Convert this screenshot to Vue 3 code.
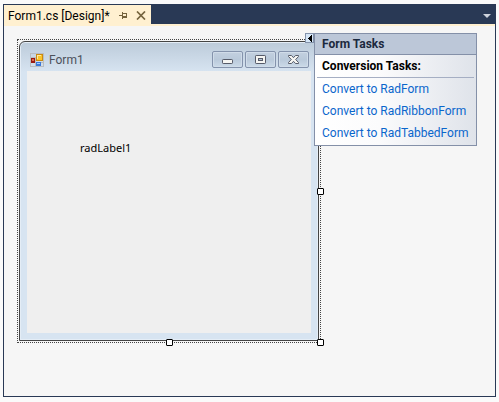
<script setup>
import { ref } from 'vue'

const tasks = ['Convert to RadForm', 'Convert to RadRibbonForm', 'Convert to RadTabbedForm']
const tasksOpen = ref(true)
</script>

<template>
  <div class="page">
    <main class="editor">
      <header class="tabs">
        <div class="tab">
          <span class="tab-name">Form1.cs [Design]*</span>
          <button class="tab-btn" type="button" aria-label="Pin tab">
            <svg width="9" height="9" viewBox="0 0 9 9" shape-rendering="crispEdges">
              <path d="M0 4h3v1H0zM3 1h1v7H3zM4 2h4v1H4zM7 2h1v5H7zM4 5h4v2H4z" fill="#75633d" />
            </svg>
          </button>
          <button class="tab-btn" type="button" aria-label="Close tab">
            <svg width="10" height="9" viewBox="0 0 10 9">
              <path d="M1 .5 9 8.500M9 .5 1 8.500" stroke="#75633d" stroke-width="1.700" />
            </svg>
          </button>
        </div>
        <button class="tab-list" type="button" aria-label="Open documents">
          <svg width="8" height="4" viewBox="0 0 8 4"><path d="M0 0h8L4 4z" fill="#ced4dd" /></svg>
        </button>
      </header>

      <section class="canvas">
        <div class="selection">
          <div class="form">
            <div class="titlebar">
              <svg class="form-icon" width="14" height="14" viewBox="0 0 14 14" shape-rendering="crispEdges">
                <path d="M.5.500h13v13H.5zM.5 4.500h5M5.500 4v9M.5 9.500h13M10.500 9v4" fill="none" stroke="#b9bdc0" />
                <rect x="6" y="1" width="7" height="7" fill="#c98a12" />
                <rect x="7" y="2" width="5" height="5" fill="#fbc52c" />
                <path d="M7 2h4v1H8v3H7z" fill="#ffeb9c" />
                <rect x="1" y="5" width="4" height="5" fill="#9c1a10" />
                <rect x="2" y="6" width="2" height="2" fill="#dc6a50" />
                <rect x="6" y="9" width="5" height="4" fill="#3b78d8" />
                <rect x="7" y="10" width="3" height="1" fill="#a2cbff" />
              </svg>
              <span class="form-title">Form1</span>
              <div class="window-buttons">
                <button type="button" aria-label="Minimize">
                  <svg width="13" height="11" viewBox="0 0 13 11">
                    <rect x="1.500" y="5.500" width="10" height="4" rx=".7" fill="#f5f5f2" stroke="#565b69" />
                  </svg>
                </button>
                <button type="button" aria-label="Maximize">
                  <svg width="13" height="11" viewBox="0 0 13 11">
                    <rect x="1.500" y="1.500" width="10" height="8" rx=".7" fill="#f5f5f2" stroke="#565b69" />
                    <rect x="4.500" y="4.500" width="4" height="2" fill="#b4c3d4" stroke="#565b69" />
                  </svg>
                </button>
                <button type="button" aria-label="Close">
                  <svg width="13" height="11" viewBox="0 0 13 11">
                    <path d="M1.500 1.500h3l2 2.200 2-2.200h3v1L8.700 5.500l2.800 3v1h-3l-2-2.200-2 2.200h-3v-1l2.800-3-2.800-3z" fill="#f5f5f2" stroke="#565b69" />
                  </svg>
                </button>
              </div>
            </div>
            <div class="form-body">
              <span class="rad-label">radLabel1</span>
            </div>
          </div>

          <i class="handle handle-right"></i>
          <i class="handle handle-bottom"></i>
          <i class="handle handle-corner"></i>

          <button class="smart-tag" type="button" aria-label="Form Tasks" @click="tasksOpen = !tasksOpen">
            <svg width="4" height="7" viewBox="0 0 4 7" shape-rendering="crispEdges">
              <path d="M3 0h1v7H3zM2 1h1v5H2zM1 2h1v3H1zM0 3h1v1H0z" fill="#000" />
            </svg>
          </button>
          <aside v-if="tasksOpen" class="tasks">
            <h2>Form Tasks</h2>
            <div class="tasks-body">
              <h3>Conversion Tasks:</h3>
              <ul>
                <li v-for="task in tasks" :key="task"><a href="#">{{ task }}</a></li>
              </ul>
            </div>
          </aside>
        </div>
      </section>
    </main>
  </div>
</template>

<style>
body {
  margin: 0;
  background: #fafafa;
}
</style>

<style scoped>
.page {
  box-sizing: border-box;
  display: flex;
  min-height: 100vh;
  padding: 4px 3px 5px;
  font: 12px/16px Roboto, "Open Sans", sans-serif;
  color: #000;
}
button {
  display: flex;
  align-items: center;
  justify-content: center;
  box-sizing: border-box;
  margin: 0;
  padding: 0;
  border: 0;
  background: none;
}
.editor {
  flex: 1;
  display: flex;
  flex-direction: column;
  border: 1px solid #293955;
  background: #f6f6f6;
}
.tabs {
  display: flex;
  justify-content: space-between;
  height: 19px;
  background: #293955;
  border-bottom: 2px solid #fff0d0;
}
.tab {
  display: flex;
  align-items: center;
  height: 21px;
  padding: 0 5px 0 4px;
  background: #fff0d0;
}
.tab-name {
  width: 110px;
  white-space: nowrap;
}
.tab-btn {
  width: 10px;
  height: 16px;
}
.tab-btn + .tab-btn {
  margin-left: 8px;
}
.tab-list {
  width: 16px;
  height: 21px;
}
.canvas {
  flex: 1;
  padding: 13px;
}
.selection {
  position: relative;
  width: 300px;
  padding: 1px;
  border: 1px dotted #444;
}
.form {
  box-sizing: border-box;
  display: flex;
  flex-direction: column;
  height: 300px;
  padding: 0 7px 7px;
  border: 1px solid #444;
  border-radius: 6px 6px 0 0;
  background: linear-gradient(#bccbda, #d7e4f1 30px);
  box-shadow: inset 0 0 0 1px #e4edf6;
}
.titlebar {
  display: flex;
  align-items: center;
  height: 29px;
  padding: 6px 2px 0 3px;
  box-sizing: border-box;
}
.form-title {
  flex: 1;
  padding-left: 5px;
  color: #4c515b;
}
.window-buttons {
  display: flex;
  gap: 2px;
}
.window-buttons button {
  width: 31px;
  height: 17px;
  border: 1px solid #8493ac;
  border-radius: 2px;
  background: linear-gradient(#c3d0df, #b9c9da 50%, #cbdae8);
  box-shadow: inset 0 0 0 1px #d0dce9;
}
.form-body {
  flex: 1;
  position: relative;
  background: #efefef;
}
.rad-label {
  position: absolute;
  left: 53px;
  top: 69px;
  font-family: "Noto Sans", "Open Sans", sans-serif;
  font-size: 11px;
}
.handle {
  position: absolute;
  box-sizing: border-box;
  width: 7px;
  height: 7px;
  border: 1px solid #000;
  border-radius: 1px;
  background: #fff;
}
.handle-right {
  right: -4px;
  top: 148px;
}
.handle-bottom {
  left: 148px;
  bottom: -4px;
}
.handle-corner {
  right: -4px;
  bottom: -4px;
}
.smart-tag {
  position: absolute;
  left: 287px;
  top: -7px;
  width: 9px;
  height: 10px;
  border: 1px solid #8493ac;
  background: #d5e6f7;
}
.tasks {
  position: absolute;
  left: 296px;
  top: -7px;
  box-sizing: border-box;
  width: 163px;
  border: 1px solid #8490a8;
  background: linear-gradient(90deg, #fff, #fbfbfc 40%, #dfe3ea);
}
.tasks h2,
.tasks h3 {
  margin: 0;
  font-size: 12px;
  font-weight: 700;
  line-height: 20px;
  white-space: nowrap;
}
.tasks h2 {
  padding-left: 7px;
  border-bottom: 1px solid #8490a8;
  background: #bcc7d8;
  color: #1b293e;
}
.tasks-body {
  padding: 1px 2px;
}
.tasks h3 {
  padding: 0 0 1px 5px;
  border-bottom: 1px solid #a5aec3;
}
.tasks ul {
  margin: 0;
  padding: 0 0 0 5px;
  list-style: none;
}
.tasks li {
  line-height: 22px;
  white-space: nowrap;
}
.tasks a {
  color: #0a66cc;
  text-decoration: none;
}
</style>
